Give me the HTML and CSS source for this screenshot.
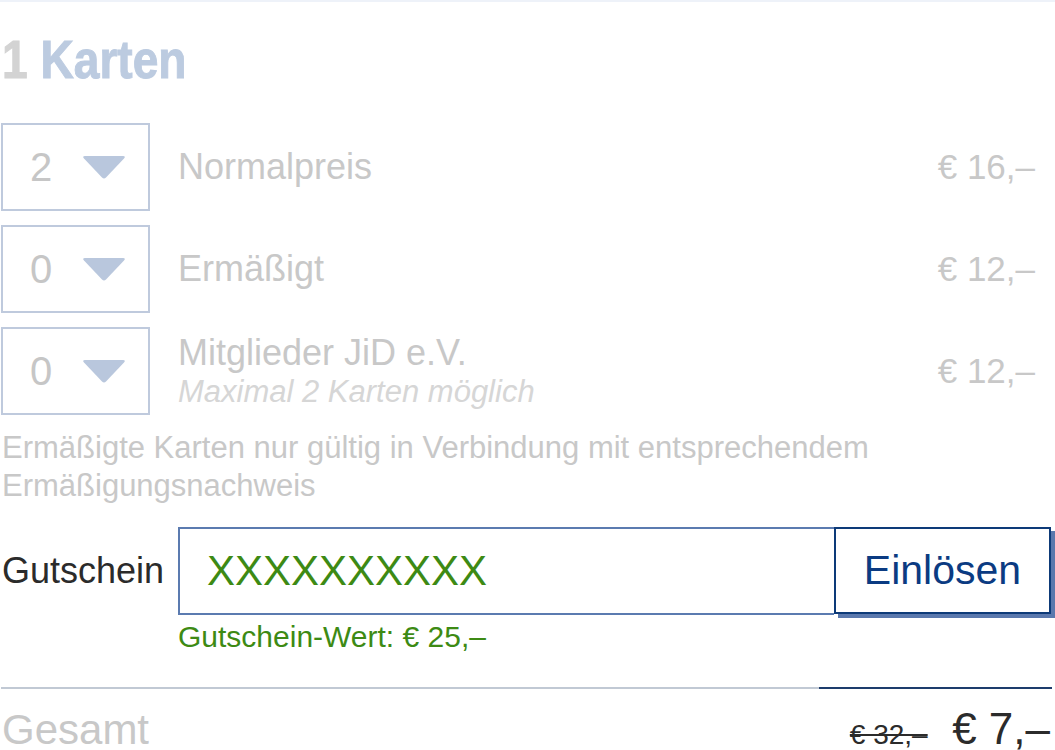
FILE: index.html
```html
<!DOCTYPE html>
<html lang="de">
<head>
    <meta charset="UTF-8">
    <title>Karten</title>
    <link rel="stylesheet" href="styles.css">
</head>
<body>
    <div class="page">
        <h1 class="title"><span class="title-text"><span class="title-num">1</span> Karten</span></h1>

        <!-- Kartenauswahl -->
        <div class="ticket-row">
            <div class="qty">
                <span class="qty-value">2</span>
                <svg class="qty-arrow" viewBox="0 0 44 23"><path d="M3 0 H41 Q44 0 42 2.5 L24 21.5 Q22 23.5 20 21.5 L2 2.5 Q0 0 3 0 Z"/></svg>
            </div>
            <div class="ticket-label">Normalpreis</div>
            <div class="ticket-price">€ 16,–</div>
        </div>

        <div class="ticket-row">
            <div class="qty">
                <span class="qty-value">0</span>
                <svg class="qty-arrow" viewBox="0 0 44 23"><path d="M3 0 H41 Q44 0 42 2.5 L24 21.5 Q22 23.5 20 21.5 L2 2.5 Q0 0 3 0 Z"/></svg>
            </div>
            <div class="ticket-label">Ermäßigt</div>
            <div class="ticket-price">€ 12,–</div>
        </div>

        <div class="ticket-row">
            <div class="qty">
                <span class="qty-value">0</span>
                <svg class="qty-arrow" viewBox="0 0 44 23"><path d="M3 0 H41 Q44 0 42 2.5 L24 21.5 Q22 23.5 20 21.5 L2 2.5 Q0 0 3 0 Z"/></svg>
            </div>
            <div class="ticket-label">
                Mitglieder JiD e.V.
                <div class="ticket-hint">Maximal 2 Karten möglich</div>
            </div>
            <div class="ticket-price">€ 12,–</div>
        </div>

        <p class="note">Ermäßigte Karten nur gültig in Verbindung mit entsprechendem Ermäßigungsnachweis</p>

        <!-- Gutschein -->
        <div class="voucher">
            <label class="voucher-label" for="code">Gutschein</label>
            <div class="voucher-field">
                <div class="voucher-box">
                    <input class="voucher-input" id="code" type="text" value="XXXXXXXXXX">
                    <button class="voucher-btn" type="button">Einlösen</button>
                </div>
                <div class="voucher-value">Gutschein-Wert: € 25,–</div>
            </div>
        </div>

        <div class="total">
            <div class="total-label">Gesamt</div>
            <div class="total-prices">
                <span class="total-old">€ 32,–</span>
                <span class="total-new">€ 7,–</span>
            </div>
        </div>
    </div>
</body>
</html>
```

FILE: styles.css
```css
/* Grundlayout */
body {
    margin: 0;
    font-family: "Liberation Sans", Arial, sans-serif;
    background: #fff;
    overflow: hidden;
}

.page {
    border-top: 2px solid #eef2f9;
    padding: 0 3px 0 1px;
}

.title {
    margin: 28px 0 33px 1px;
    font-family: "Liberation Sans", Arial, sans-serif;
    font-size: 53px;
    line-height: 60px;
    font-weight: 700;
    color: #bccbe0;
    -webkit-text-stroke: 1px currentColor;
}

.title-text {
    display: inline-block;
    transform: scaleX(0.87);
    transform-origin: left center;
}

.title-num {
    color: #d3d3d3;
}

/* Kartenzeilen */
.ticket-row {
    display: flex;
    align-items: center;
    height: 88px;
    margin-bottom: 14px;
}

.qty {
    box-sizing: border-box;
    width: 149px;
    height: 88px;
    border: 2px solid #bfcadd;
    display: flex;
    align-items: center;
    padding-left: 27px;
}

.qty-value {
    font-size: 40px;
    color: #c6c6c6;
    width: 52px;
}

.qty-arrow {
    width: 44px;
    height: 23px;
    fill: #b9c7dd;
}

.ticket-label {
    flex: 1;
    margin-left: 28px;
    font-size: 36px;
    color: #c8c8c8;
    line-height: 42px;
}

.ticket-hint {
    font-size: 31px;
    font-style: italic;
    color: #d6d6d6;
    line-height: 36px;
}

.ticket-price {
    font-size: 35px;
    color: #c8c8c8;
    padding-right: 17px;
}

.note {
    margin: 7px 0 22px 1px;
    font-size: 31px;
    line-height: 38px;
    color: #c8c8c8;
}

/* Gutschein */
.voucher {
    display: flex;
    align-items: flex-start;
}

.voucher-label {
    width: 176px;
    padding-left: 1px;
    line-height: 88px;
    font-size: 36px;
    color: #2b2b2b;
}

.voucher-field {
    flex: 1;
}

.voucher-box {
    display: flex;
    height: 88px;
    margin-right: 1px;
}

.voucher-input {
    flex: 1;
    min-width: 0;
    box-sizing: border-box;
    height: 88px;
    border: 2px solid #5b7bb0;
    border-right: none;
    padding: 0 0 0 27px;
    font-family: "Liberation Sans", Arial, sans-serif;
    font-size: 42px;
    color: #3d8a14;
    outline: none;
}

.voucher-btn {
    box-sizing: border-box;
    width: 217px;
    height: 87px;
    border: 2px solid #0d3a78;
    background: #fff;
    box-shadow: 4px 4px 0 #5a78ad;
    font-family: "Liberation Sans", Arial, sans-serif;
    font-size: 41px;
    color: #0b3b82;
    padding: 0;
    cursor: pointer;
}

.voucher-value {
    margin-top: 4px;
    font-size: 30px;
    line-height: 36px;
    color: #3d8a14;
}

/* Summe */
.total {
    margin-top: 32px;
    border-top: 2px solid #c1c9d4;
    display: flex;
    justify-content: space-between;
    align-items: baseline;
    position: relative;
    padding-top: 16px;
    line-height: 48px;
}

.total::after {
    content: "";
    position: absolute;
    right: 0;
    top: -2px;
    width: 233px;
    height: 2px;
    background: #1d3c6c;
}

.total-label {
    font-size: 42px;
    color: #c8c8c8;
    padding-left: 1px;
}

.total-prices {
    padding-right: 2px;
}

.total-old {
    font-size: 28px;
    color: #2b2b2b;
    text-decoration: line-through;
    margin-right: 20px;
}

.total-new {
    font-size: 44px;
    color: #2b2b2b;
}
```
